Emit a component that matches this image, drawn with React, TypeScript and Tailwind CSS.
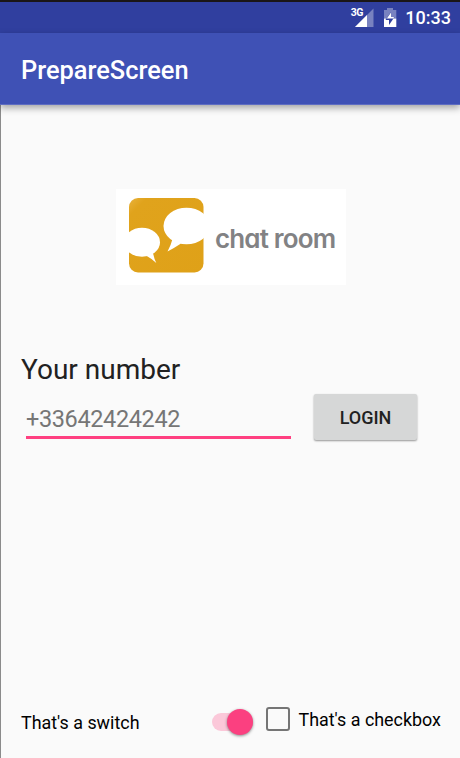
const StatusIcons = () => (
  <svg className="h-[31px] w-[56px]" viewBox="0 0 56 31" fill="white">
    <path d="M28.500 6.500V25H10z" fillOpacity=".35" />
    <path d="M22 13V25H10z" />
    <path d="M42 6h6v2h3.300v8.500H39V8h3z" fillOpacity=".35" />
    <path d="M39 16.500H51.300V25H39z" />
    <path d="M46 10l-5.500 8H44v5l5.500-8H46z" fill="#303f9f" />
    <path d="M46 10.500l-4.200 6h7V15H46z" />
  </svg>
);

const StatusBar = () => (
  <div className="flex h-[33px] items-center border-t-2 border-[#1a1617] bg-[#303f9f] pr-[9px] text-white">
    <div className="relative ml-auto h-[31px] w-[56px]">
      <StatusIcons />
      <span className="absolute top-[5px] left-[5.5px] text-[10.5px] leading-[12px] font-bold tracking-[-0.6px]">3G</span>
    </div>
    <span className="ml-[4px] pt-px text-[18px] leading-[20px] font-medium">10:33</span>
  </div>
);

const Toolbar = () => (
  <header className="flex h-[72px] items-center border-b border-[#5f6dc2] bg-[#3f51b5] pt-[3px] pl-[21px] shadow-[0_3px_7px_rgba(0,0,0,0.35)]">
    <h1 className="text-[25.4px] font-medium text-white">PrepareScreen</h1>
  </header>
);

const Logo = () => (
  <div className="mt-[84px] ml-[116px] flex h-[96px] w-[230px] items-center bg-white">
    <svg className="h-[96px] w-[96px] shrink-0" viewBox="0 0 96 96">
      <defs>
        <linearGradient id="gold" x1="0" y1="0" x2="1" y2="1">
          <stop offset="0" stopColor="#e9b23c" />
          <stop offset=".12" stopColor="#e0a31c" />
          <stop offset="1" stopColor="#dfa118" />
        </linearGradient>
      </defs>
      <rect x="13" y="9" width="74.5" height="74.5" rx="9" fill="url(#gold)" />
      <g fill="white">
        <ellipse cx="70.5" cy="37" rx="23" ry="18.3" />
        <path d="M56.5 50q-1.5 6-5 12.6Q59 58.5 65 54.5z" />
        <ellipse cx="26" cy="53.3" rx="18" ry="14.5" />
        <path d="M30 66.5q5.5 3 10.3 7.5-2.5-5-3.3-10.5z" />
      </g>
    </svg>
    <span className="ml-[3px] pt-[2px] font-['Inter'] text-[26px] font-semibold tracking-[-0.85px] whitespace-nowrap text-[#828284] [font-feature-settings:'cv11']">
      chat room
    </span>
  </div>
);

const LoginForm = () => (
  <section className="mt-[67px] pl-[21px]">
    <label htmlFor="number" className="block text-[28px] leading-[36px] text-[#212121]">
      Your number
    </label>
    <div className="flex pt-[6px]">
      <input
        id="number"
        type="tel"
        placeholder="+33642424242"
        className="ml-[5px] h-[45px] w-[265px] border-b-[3px] border-[#ff4081] bg-transparent pt-[8px] text-[23.5px] tracking-[-0.38px] outline-none placeholder:text-[#767676]"
      />
      <button className="ml-[23px] h-[46px] w-[103px] rounded-[2px] bg-[#d6d7d7] text-[18px] font-medium text-[#212121] shadow-[0_1px_2px_rgba(0,0,0,0.4)]">
        LOGIN
      </button>
    </div>
  </section>
);

const Options = () => (
  <footer className="mt-auto flex h-[63px] items-start pl-[21px] text-[17.9px] leading-[22px] text-black">
    <span className="w-[191px] pt-[17px]">That's a switch</span>
    <div role="switch" aria-checked="true" className="mt-[18px] h-[18px] w-[41px] rounded-full bg-[#fbc8d9]">
      <div className="-mt-[4px] ml-auto h-[26px] w-[26px] rounded-full bg-[#fb4080] shadow-[0_1px_3px_rgba(0,0,0,0.45)]" />
    </div>
    <div className="flex pl-[13px]">
      <div role="checkbox" aria-checked="false" className="mt-[12px] h-[24px] w-[24px] rounded-[3px] border-[2.5px] border-[#757575]" />
      <span className="pt-[14px] pl-[8.5px] whitespace-nowrap">That's a checkbox</span>
    </div>
  </footer>
);

export default function App() {
  return (
    <div className="flex h-[758px] w-[460px] flex-col overflow-hidden bg-[#fafafa] font-['Roboto',sans-serif] shadow-[inset_1px_0_0_#8b8b8b]">
      <StatusBar />
      <Toolbar />
      <Logo />
      <LoginForm />
      <Options />
    </div>
  );
}
